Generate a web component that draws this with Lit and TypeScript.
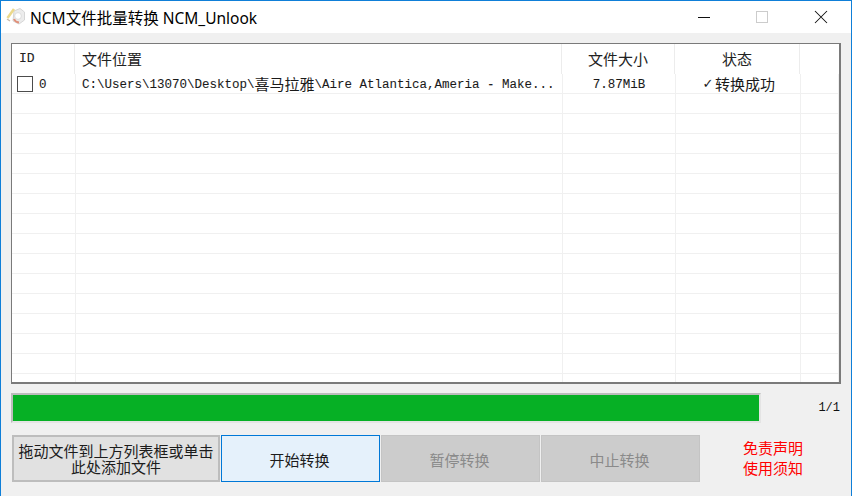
import { LitElement, html, css, svg } from "lit";
import { customElement } from "lit/decorators.js";

const CJK = css`"Noto Sans CJK SC", sans-serif`;

@customElement("app-root")
export class AppRoot extends LitElement {
  static styles = css`
    :host {
      display: block;
      width: 852px;
      height: 496px;
      overflow: hidden;
      font-family: "Liberation Mono", "Noto Sans CJK SC", monospace;
      color: #111;
    }
    .window {
      box-sizing: border-box;
      width: 852px;
      height: 496px;
      border: 1px solid #0f7fd8;
      border-bottom: none;
      background: #f0f0f0;
      display: flex;
      flex-direction: column;
    }
    .titlebar {
      height: 32px;
      flex: none;
      background: #fff;
      display: flex;
      align-items: center;
      padding-left: 5px;
    }
    .appicon { width: 20px; height: 20px; flex: none; }
    .title {
      margin-left: 4px;
      font: 15.5px "Noto Sans", "Noto Sans CJK SC", sans-serif;
      color: #000;
      white-space: nowrap;
    }
    .controls { margin-left: auto; display: flex; padding-right: 1px; }
    .ctl { width: 58.5px; height: 32px; display: flex; align-items: center; justify-content: center; }
    .ctl svg { width: 14px; height: 14px; }
    .content {
      flex: 1;
      display: flex;
      flex-direction: column;
      padding: 10px 10px 0 10px;
    }
    .list {
      box-sizing: border-box;
      height: 341px;
      width: 830px;
      border: 1px solid #7a7a7a;
      border-width: 1px 2px 2px 1px;
      background: #fff;
      overflow: hidden;
    }
    .head {
      display: grid;
      grid-template-columns: 63px 487px 113px 125px 1fr;
      height: 30px;
    }
    .row {
      display: grid;
      grid-template-columns: 64px 487px 113px 125px 1fr;
      height: 20px;
    }
    .head > div {
      display: flex;
      align-items: center;
      justify-content: center;
      border-right: 1px solid #ececec;
      font: 15px ${CJK};
      color: #222;
      height: 30px;
      padding-bottom: 2px;
      box-sizing: border-box;
    }
    .head > div.left { justify-content: flex-start; padding-left: 7px; }
    .head > div.id {
      font: 13px "Liberation Mono", monospace;
      -webkit-text-stroke: 0.1px #222;
      padding-left: 7px;
      justify-content: flex-start;
    }
    .head > div.last { border-right: none; }
    .row > div {
      box-sizing: border-box;
      border-right: 1px solid #f0f0f0;
      border-bottom: 1px solid #f0f0f0;
      display: flex;
      align-items: center;
      white-space: nowrap;
      font-size: 12.5px;
      overflow: hidden;
      color: #1a1a1a;
    }
    .mono { -webkit-text-stroke: 0.08px #1a1a1a; position: relative; top: 1px; }
    .row > div.path { padding-left: 6px; }
    .row > div.c { justify-content: center; }
    .row > div.idc { padding-left: 5px; gap: 6px; }
    .check { width: 16px; height: 16px; box-sizing: border-box; border: 1px solid #4c4c4c; background: #fff; flex: none; margin-top: 1px; }
    .cj { font: 15px ${CJK}; }
    .tick { font: 13px "DejaVu Sans", sans-serif; width: 14px; text-align: center; }
    .progress-row {
      margin-top: 9px;
      height: 30px;
      display: flex;
      align-items: center;
    }
    .bar {
      box-sizing: border-box;
      width: 750px;
      height: 30px;
      border: 2px solid #bcbcbc;
      border-right-color: #e4e4e4;
      border-bottom-color: #e4e4e4;
      background: #06b025;
    }
    .count { margin-left: auto; padding-right: 1px; font-size: 12px; width: 30px; text-align: right; color: #111; }
    .buttons {
      margin-top: 12px;
      display: flex;
      align-items: stretch;
      height: 47px;
      gap: 1px;
    }
    .btn {
      box-sizing: border-box;
      width: 159px;
      border: 1px solid #adadad;
      background: #e1e1e1;
      display: flex;
      align-items: center;
      justify-content: center;
      text-align: center;
      font: 15px ${CJK};
      color: #1c1c1c;
    }
    .btn.add { width: 208px; line-height: 16px; margin-left: 1px; border-width: 2px; border-color: #bdbdbd; }
    .btn.primary { background: #e5f1fb; border: 1px solid #0078d7; padding: 1px 2px 0 0; }
    .btn.off { background: #cccccc; border: 1px solid #c4c4c4; color: #8a8a8a; padding: 1px 2px 0 0; }
    .notice {
      flex: 1;
      display: flex;
      flex-direction: column;
      align-items: center;
      justify-content: center;
      color: #ff0000;
      font: 15px/20px ${CJK};
      padding: 0 0 2px 4px;
    }
  `;

  private icon() {
    return html`<svg class="appicon" viewBox="0 0 20 20">
      ${svg`
        <path d="M8 4 L14 1.5 L18.5 5 L18.5 13 L13 17 L7 14 Z" fill="#ececec" stroke="#d6d6d6" stroke-width="1"/>
        <circle cx="12" cy="9" r="3.4" fill="#fff" stroke="#dcdcdc" stroke-width="1"/>
        <path d="M8 12 Q9 15 13 15.5" stroke="#e0907a" stroke-width="2" fill="none"/>
        <path d="M1.5 11 L8 2" stroke="#ecd98c" stroke-width="2.6"/>
        <path d="M1 12 L4 14" stroke="#c9b9a8" stroke-width="1.4"/>
      `}
    </svg>`;
  }

  render() {
    const empties = Array.from({ length: 15 });
    return html`
      <div class="window">
        <div class="titlebar">
          ${this.icon()}
          <div class="title">NCM文件批量转换 NCM_Unlook</div>
          <div class="controls">
            <div class="ctl"><svg viewBox="0 0 14 14"><path d="M1 7.5H13" stroke="#111" stroke-width="1"/></svg></div>
            <div class="ctl"><svg viewBox="0 0 14 14"><rect x="1.5" y="1.5" width="11" height="11" fill="none" stroke="#ccc"/></svg></div>
            <div class="ctl"><svg viewBox="0 0 14 14"><path d="M1 1L13 13M13 1L1 13" stroke="#111" stroke-width="1.05"/></svg></div>
          </div>
        </div>
        <div class="content">
          <div class="list">
            <div class="head">
              <div class="id">ID</div>
              <div class="left">文件位置</div>
              <div>文件大小</div>
              <div>状态</div>
              <div class="last"></div>
            </div>
            <div class="row">
              <div class="idc"><span class="check"></span><span class="mono">0</span></div>
              <div class="path"><span class="mono">C:\\Users\\13070\\Desktop\\</span><span class="cj">喜马拉雅</span><span class="mono">\\Aire Atlantica,Ameria - Make...</span></div>
              <div class="c"><span class="mono">7.87MiB</span></div>
              <div class="c"><span class="tick">✓</span><span class="cj">转换成功</span></div>
              <div></div>
            </div>
            ${empties.map(() => html`<div class="row"><div></div><div></div><div></div><div></div><div></div></div>`)}
          </div>
          <div class="progress-row">
            <div class="bar"></div>
            <div class="count">1/1</div>
          </div>
          <div class="buttons">
            <div class="btn add">拖动文件到上方列表框或单击<br />此处添加文件</div>
            <div class="btn primary">开始转换</div>
            <div class="btn off">暂停转换</div>
            <div class="btn off">中止转换</div>
            <div class="notice"><span>免责声明</span><span>使用须知</span></div>
          </div>
        </div>
      </div>
    `;
  }
}
